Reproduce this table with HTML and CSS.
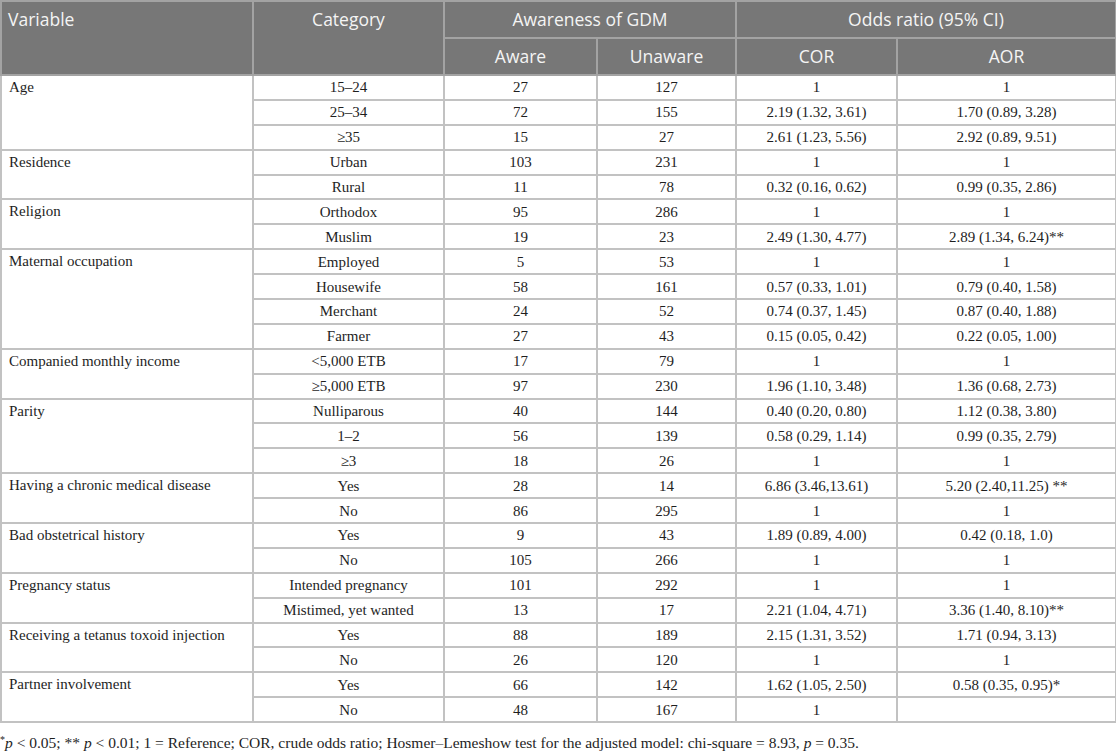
FILE: index.html
```html
<!DOCTYPE html>
<html>
<head>
<meta charset="utf-8">
<link rel="stylesheet" href="styles.css">
</head>
<body>
<table class="tbl">
  <colgroup>
    <col class="c1"><col class="c2"><col class="c3"><col class="c4"><col class="c5"><col class="c6">
  </colgroup>
  <thead>
    <tr class="h1">
      <th rowspan="2" class="left">Variable</th>
      <th rowspan="2">Category</th>
      <th colspan="2">Awareness of GDM</th>
      <th colspan="2">Odds ratio (95% CI)</th>
    </tr>
    <tr class="h2">
      <th>Aware</th>
      <th>Unaware</th>
      <th>COR</th>
      <th>AOR</th>
    </tr>
  </thead>
  <tbody>
    <tr><td rowspan="3" class="var">Age</td><td>15–24</td><td>27</td><td>127</td><td>1</td><td>1</td></tr>
    <tr><td>25–34</td><td>72</td><td>155</td><td>2.19 (1.32, 3.61)</td><td>1.70 (0.89, 3.28)</td></tr>
    <tr><td>≥35</td><td>15</td><td>27</td><td>2.61 (1.23, 5.56)</td><td>2.92 (0.89, 9.51)</td></tr>
    <tr><td rowspan="2" class="var">Residence</td><td>Urban</td><td>103</td><td>231</td><td>1</td><td>1</td></tr>
    <tr><td>Rural</td><td>11</td><td>78</td><td>0.32 (0.16, 0.62)</td><td>0.99 (0.35, 2.86)</td></tr>
    <tr><td rowspan="2" class="var">Religion</td><td>Orthodox</td><td>95</td><td>286</td><td>1</td><td>1</td></tr>
    <tr><td>Muslim</td><td>19</td><td>23</td><td>2.49 (1.30, 4.77)</td><td>2.89 (1.34, 6.24)**</td></tr>
    <tr><td rowspan="4" class="var">Maternal occupation</td><td>Employed</td><td>5</td><td>53</td><td>1</td><td>1</td></tr>
    <tr><td>Housewife</td><td>58</td><td>161</td><td>0.57 (0.33, 1.01)</td><td>0.79 (0.40, 1.58)</td></tr>
    <tr><td>Merchant</td><td>24</td><td>52</td><td>0.74 (0.37, 1.45)</td><td>0.87 (0.40, 1.88)</td></tr>
    <tr><td>Farmer</td><td>27</td><td>43</td><td>0.15 (0.05, 0.42)</td><td>0.22 (0.05, 1.00)</td></tr>
    <tr><td rowspan="2" class="var">Companied monthly income</td><td>&lt;5,000 ETB</td><td>17</td><td>79</td><td>1</td><td>1</td></tr>
    <tr><td>≥5,000 ETB</td><td>97</td><td>230</td><td>1.96 (1.10, 3.48)</td><td>1.36 (0.68, 2.73)</td></tr>
    <tr><td rowspan="3" class="var">Parity</td><td>Nulliparous</td><td>40</td><td>144</td><td>0.40 (0.20, 0.80)</td><td>1.12 (0.38, 3.80)</td></tr>
    <tr><td>1–2</td><td>56</td><td>139</td><td>0.58 (0.29, 1.14)</td><td>0.99 (0.35, 2.79)</td></tr>
    <tr><td>≥3</td><td>18</td><td>26</td><td>1</td><td>1</td></tr>
    <tr><td rowspan="2" class="var">Having a chronic medical disease</td><td>Yes</td><td>28</td><td>14</td><td>6.86 (3.46,13.61)</td><td>5.20 (2.40,11.25) **</td></tr>
    <tr><td>No</td><td>86</td><td>295</td><td>1</td><td>1</td></tr>
    <tr><td rowspan="2" class="var">Bad obstetrical history</td><td>Yes</td><td>9</td><td>43</td><td>1.89 (0.89, 4.00)</td><td>0.42 (0.18, 1.0)</td></tr>
    <tr><td>No</td><td>105</td><td>266</td><td>1</td><td>1</td></tr>
    <tr><td rowspan="2" class="var">Pregnancy status</td><td>Intended pregnancy</td><td>101</td><td>292</td><td>1</td><td>1</td></tr>
    <tr><td>Mistimed, yet wanted</td><td>13</td><td>17</td><td>2.21 (1.04, 4.71)</td><td>3.36 (1.40, 8.10)**</td></tr>
    <tr><td rowspan="2" class="var">Receiving a tetanus toxoid injection</td><td>Yes</td><td>88</td><td>189</td><td>2.15 (1.31, 3.52)</td><td>1.71 (0.94, 3.13)</td></tr>
    <tr><td>No</td><td>26</td><td>120</td><td>1</td><td>1</td></tr>
    <tr><td rowspan="2" class="var">Partner involvement</td><td>Yes</td><td>66</td><td>142</td><td>1.62 (1.05, 2.50)</td><td>0.58 (0.35, 0.95)*</td></tr>
    <tr><td>No</td><td>48</td><td>167</td><td>1</td><td></td></tr>
  </tbody>
</table>
<p class="note"><sup>*</sup><i>p</i> &lt; 0.05; ** <i>p</i> &lt; 0.01; 1 = Reference; COR, crude odds ratio; Hosmer–Lemeshow test for the adjusted model: chi-square = 8.93, <i>p</i> = 0.35.</p>
</body>
</html>
```
FILE: styles.css
```css
html, body {
  margin: 0;
  padding: 0;
  background: #ffffff;
}

.tbl {
  width: 1115px;
  table-layout: fixed;
  border-collapse: collapse;
  font-family: "Liberation Serif", "Times New Roman", serif;
  font-size: 15px;
  color: #1e1e1e;
}

.c1 { width: 252px; }
.c2 { width: 191px; }
.c3 { width: 153px; }
.c4 { width: 139px; }
.c5 { width: 161px; }
.c6 { width: 219px; }

.tbl th {
  background: #777777;
  color: #f4f4f4;
  font-family: "Open Sans", "Noto Sans", sans-serif;
  font-weight: 400;
  font-size: 17.5px;
  border: 2px solid #a3a3a3;
  padding: 0 6px;
  text-align: center;
  vertical-align: top;
  line-height: 35px;
}

.tbl th.left {
  text-align: left;
}

.h1 { height: 37px; }
.h2 { height: 37px; }

.tbl td {
  border: 2px solid #c2c2c2;
  padding: 0 6px;
  text-align: center;
  vertical-align: middle;
  height: 22.9px;
  line-height: 22px;
  white-space: nowrap;
}

.tbl td.var {
  text-align: left;
  vertical-align: top;
  padding-left: 7px;
}

.note {
  margin: 12px 0 0 0;
  font-family: "Liberation Serif", "Times New Roman", serif;
  font-size: 15.5px;
  line-height: 16px;
  color: #1e1e1e;
  white-space: nowrap;
}

.note sup {
  font-size: 10px;
  vertical-align: 5px;
  line-height: 0;
}
```
